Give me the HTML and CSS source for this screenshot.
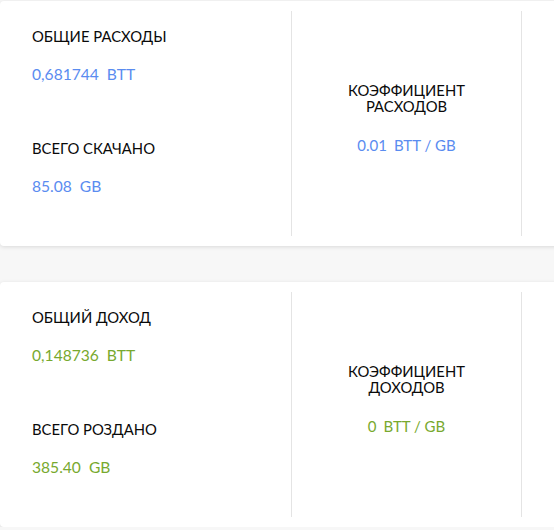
FILE: index.html
```html
<!DOCTYPE html>
<html lang="ru">
<head>
<meta charset="utf-8">
<link rel="stylesheet" href="styles.css">
</head>
<body>
<div class="page">
  <section class="card">
    <div class="col col-totals">
      <div class="stat">
        <div class="label">ОБЩИЕ РАСХОДЫ</div>
        <div class="value blue">0,681744<span class="unit">BTT</span></div>
      </div>
      <div class="stat">
        <div class="label">ВСЕГО СКАЧАНО</div>
        <div class="value blue">85.08<span class="unit">GB</span></div>
      </div>
    </div>
    <div class="col col-ratio">
      <div class="label center">КОЭФФИЦИЕНТ<br>РАСХОДОВ</div>
      <div class="value blue">0.01<span class="unit">BTT / GB</span></div>
    </div>
    <div class="col col-extra"></div>
  </section>
  <section class="card">
    <div class="col col-totals">
      <div class="stat">
        <div class="label">ОБЩИЙ ДОХОД</div>
        <div class="value green">0,148736<span class="unit">BTT</span></div>
      </div>
      <div class="stat">
        <div class="label">ВСЕГО РОЗДАНО</div>
        <div class="value green">385.40<span class="unit">GB</span></div>
      </div>
    </div>
    <div class="col col-ratio">
      <div class="label center">КОЭФФИЦИЕНТ<br>ДОХОДОВ</div>
      <div class="value green">0<span class="unit">BTT / GB</span></div>
    </div>
    <div class="col col-extra"></div>
  </section>
</div>
</body>
</html>
```
FILE: styles.css
```css
html, body {
  margin: 0;
  padding: 0;
  background: #f7f7f7;
  overflow: hidden;
}
body {
  font-family: Lato, "Noto Sans", sans-serif;
  color: #0a0a0a;
}
.page {
  width: 720px;
  padding-top: 1px;
  display: flex;
  flex-direction: column;
  gap: 36px;
}
.card {
  height: 245px;
  background: #fff;
  border-radius: 4px;
  box-shadow: 0 1px 4px rgba(0,0,0,0.12);
  display: flex;
  box-sizing: border-box;
}
.col {
  margin: 10px 0;
  box-sizing: border-box;
}
.col-totals {
  width: 291px;
  padding: 17px 0 0 32px;
  display: flex;
  flex-direction: column;
  gap: 57px;
}
.col-ratio {
  width: 231px;
  border-left: 1px solid #e4e4e4;
  border-right: 1px solid #e4e4e4;
  display: flex;
  flex-direction: column;
  align-items: center;
  justify-content: center;
  padding-bottom: 11px;
}
.col-extra {
  flex: 1;
}
.label {
  font-size: 14.8px;
  line-height: 16px;
}
.label.center {
  text-align: center;
}
.value {
  font-size: 15.6px;
  line-height: 17px;
  margin-top: 22px;
}
.unit {
  margin-left: 8px;
}
.col-ratio .value {
  font-size: 15px;
  margin-top: 23px;
}
.col-ratio .unit {
  margin-left: 7px;
}
.blue { color: #5a8cf0; }
.green { color: #78a92e; }
```
